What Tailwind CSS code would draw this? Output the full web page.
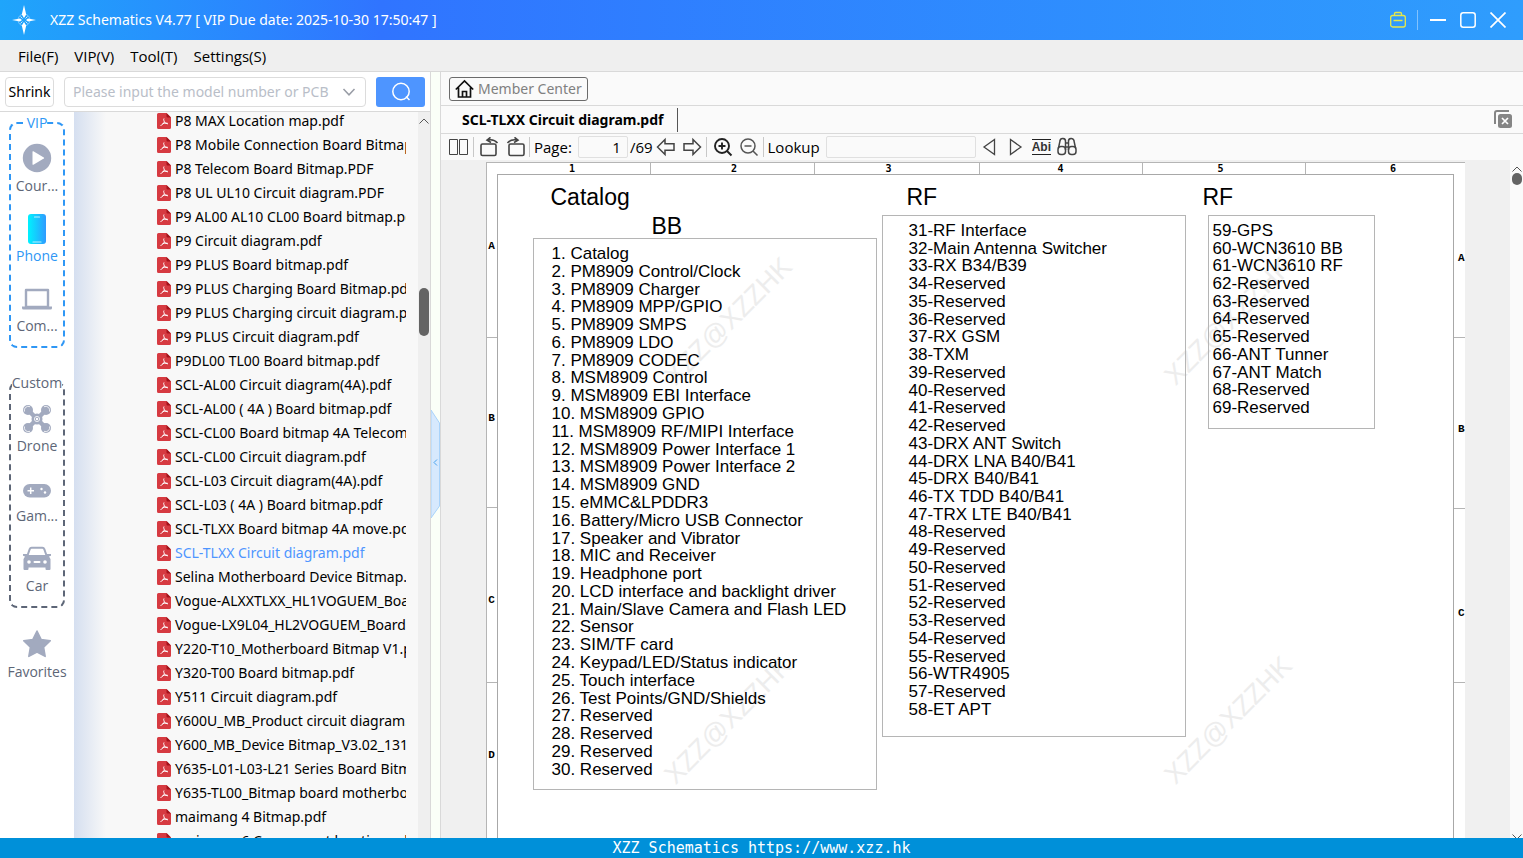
<!DOCTYPE html>
<html lang="en">
<head>
    <meta charset="UTF-8">
    <meta name="viewport" content="width=device-width, initial-scale=1.0">
    <title>XZZ Schematics</title>
    <script src="https://cdn.jsdelivr.net/npm/@tailwindcss/browser@4"></script>
</head>
<body class="h-screen flex flex-col overflow-hidden bg-white text-black text-[14px] leading-5 font-['Noto_Sans','Noto_Sans_CJK_SC',sans-serif]">
    <!-- Title bar -->
    <header class="h-10 shrink-0 flex items-center bg-linear-to-r from-[#1fa5fb] via-[#3074ff] via-25% to-[#2f9dfd] text-white pl-3 pr-[17px]">
        <svg class="w-6 h-8 shrink-0" viewBox="0 0 24 32" fill="none">
            <circle cx="12" cy="16" r="6" stroke="#9fd4ff" stroke-width="1" opacity=".7"/>
            <path d="M12 1l2.200 9.500L12 14l-2.200-3.500zM12 31l2.200-9.500L12 18l-2.200 3.500zM0 16l8-1.600 2 1.600-2 1.600zM24 16l-8-1.600-2 1.600 2 1.600z" fill="#fff"/>
            <path d="M8.500 12.500l2 2M15.500 12.500l-2 2M8.500 19.500l2-2M15.500 19.500l-2-2" stroke="#cfe8ff"/>
        </svg>
        <h1 class="ml-3.5 whitespace-nowrap">XZZ Schematics V4.77 [ VIP Due date: 2025-10-30 17:50:47 ]</h1>
        <div class="ml-auto flex items-center">
            <button aria-label="Toolbox" class="w-4 h-5">
                <svg class="w-4 h-5" viewBox="0 0 16 20" fill="none" stroke="#e6e84a" stroke-width="1.300">
                    <rect x=".7" y="5.500" width="14.600" height="11.500" rx="2"/>
                    <path d="M4.500 5.500V3.700a1.200 1.200 0 0 1 1.200-1.200h4.600a1.200 1.200 0 0 1 1.200 1.200v1.800M3.500 10.500h9"/>
                </svg>
            </button>
            <span class="w-px h-5 bg-white/40 ml-[11px]"></span>
            <button aria-label="Minimize" class="w-4 h-4 ml-3">
                <svg class="w-4 h-4" viewBox="0 0 16 16" stroke="#fff" stroke-width="2"><path d="M0 8h16"/></svg>
            </button>
            <button aria-label="Maximize" class="w-4 h-4 ml-3.5">
                <svg class="w-4 h-4" viewBox="0 0 16 16" fill="none" stroke="#fff" stroke-width="1.500"><rect x=".8" y=".8" width="14.400" height="14.400" rx="2.500"/></svg>
            </button>
            <button aria-label="Close" class="w-4 h-4 ml-3.5">
                <svg class="w-4 h-4" viewBox="0 0 16 16" stroke="#fff" stroke-width="1.700"><path d="M.5.5l15 15M15.500.5l-15 15"/></svg>
            </button>
        </div>
    </header>

    <!-- Menu bar -->
    <nav class="h-8 shrink-0 flex items-center gap-4 px-[18px] bg-[#efefef] border-b border-[#d9d9d9] text-[15px] font-['Open_Sans',sans-serif]">
        <button>File(F)</button>
        <button>VIP(V)</button>
        <button>Tool(T)</button>
        <button>Settings(S)</button>
    </nav>

    <main class="flex-1 min-h-0 flex">
        <!-- Left panel -->
        <section class="w-[431px] shrink-0 flex flex-col border-r border-[#d9d9d9]">
            <form class="h-10 shrink-0 flex items-center px-[5px] border-b border-[#d9d9d9]">
                <button type="button" class="w-[49px] h-[30px] border border-[#dcdcdc] rounded text-center">Shrink</button>
                <div class="relative ml-2.5">
                    <input type="text" aria-label="Model number" placeholder="Please input the model number or PCB" class="w-[302px] h-[30px] pl-2 pr-8 border border-[#dcdcdc] rounded placeholder:text-[#b9bec8] outline-none">
                    <svg class="absolute right-2.5 top-2 w-3.5 h-3.5" viewBox="0 0 14 14" fill="none" stroke="#999da6" stroke-width="1.500"><path d="M1.500 4L7 9.800 12.500 4"/></svg>
                </div>
                <button type="button" aria-label="Search" class="ml-2.5 w-[49px] h-[30px] rounded-[3px] bg-[#4e95ff] flex items-center justify-center">
                    <svg class="w-5 h-5" viewBox="0 0 20 20" fill="none" stroke="#fff" stroke-width="1.500"><circle cx="10" cy="9.500" r="8.200"/><path d="M15 14.500l3.500 3.500"/></svg>
                </button>
            </form>

            <div class="flex-1 min-h-0 flex">
                <!-- Categories -->
                <aside class="w-[74px] shrink-0 pt-1 px-[9px] text-[#5d6677] font-['Open_Sans',sans-serif]">
                    <fieldset class="min-w-0 border-2 border-dashed border-[#2f97f5] rounded-lg pt-3 pb-2.5">
                        <legend class="mx-auto leading-[14px] text-[#2f97f5]">VIP</legend>
                        <button class="flex flex-col items-center gap-0.5 mx-auto">
                            <svg class="w-8 h-8" viewBox="0 0 32 32"><circle cx="16" cy="16" r="14.200" fill="#a2aabf"/><path d="M11.500 9.800v12.400a.6.600 0 0 0 .9.500l10.400-6.200a.6.600 0 0 0 0-1L12.400 9.300a.6.600 0 0 0-.9.500z" fill="#fff"/></svg>
                            <span>Cour...</span>
                        </button>
                        <button class="flex flex-col items-center gap-0.5 mx-auto mt-4 text-[#2f97f5]">
                            <svg class="w-8 h-8" viewBox="0 0 32 32">
                                <defs><linearGradient id="phone"><stop offset="0" stop-color="#00f2fe"/><stop offset="1" stop-color="#2f9bff"/></linearGradient></defs>
                                <rect x="7" y="2" width="18" height="30" rx="3" fill="url(#phone)"/>
                                <path d="M13.500 5h5M12 30h8" stroke="#b8f2ff" stroke-width="1.200" stroke-linecap="round"/>
                            </svg>
                            <span>Phone</span>
                        </button>
                        <button class="flex flex-col items-center gap-0.5 mx-auto mt-4">
                            <svg class="w-8 h-8" viewBox="0 0 32 32"><path d="M5 8h22v17H5z" fill="none" stroke="#a2aabf" stroke-width="2.400" stroke-linejoin="round"/><path d="M1 24.500h30V26a1.500 1.500 0 0 1-1.500 1.500h-27A1.500 1.500 0 0 1 1 26z" fill="#a2aabf"/></svg>
                            <span>Com...</span>
                        </button>
                    </fieldset>
                    <fieldset class="min-w-0 mt-7 border-2 border-dashed border-[#5d6677] rounded-lg pt-3 pb-2.5">
                        <legend class="mx-auto leading-[14px] whitespace-nowrap">Custom</legend>
                        <button class="flex flex-col items-center gap-0.5 mx-auto">
                            <svg class="w-8 h-8" viewBox="0 0 32 32" fill="#a2aabf">
                                <path d="M6 7l20 20M26 7L6 27" stroke="#a2aabf" stroke-width="4.500"/>
                                <circle cx="7" cy="8" r="5"/><circle cx="25" cy="8" r="5"/><circle cx="7" cy="26" r="5"/><circle cx="25" cy="26" r="5"/><circle cx="16" cy="17" r="5.500"/>
                                <g fill="none" stroke="#fff" stroke-width=".8"><circle cx="16" cy="17" r="2.600"/><path d="M3.500 9.500A4 4 0 0 1 9 4.700M28.500 9.500A4 4 0 0 0 23 4.700M3.500 24.500A4 4 0 0 0 9 29.300M28.500 24.500A4 4 0 0 1 23 29.300"/></g>
                                <circle cx="16" cy="17" r="1.200" fill="#fff"/>
                            </svg>
                            <span>Drone</span>
                        </button>
                        <button class="flex flex-col items-center gap-0.5 mx-auto mt-4">
                            <svg class="w-8 h-8" viewBox="0 0 32 32"><rect x="2" y="12" width="28" height="13.500" rx="6.700" fill="#a2aabf"/><path d="M6.500 18.700h6.500M9.700 15.500V22" stroke="#fff" stroke-width="1.500"/><circle cx="20.500" cy="17" r="1.200" fill="#fff"/><circle cx="24" cy="20.500" r="1.200" fill="#fff"/></svg>
                            <span>Gam...</span>
                        </button>
                        <button class="flex flex-col items-center gap-0.5 mx-auto mt-4">
                            <svg class="w-8 h-8" viewBox="0 0 32 32">
                                <path d="M6.500 13.500L8.700 7.200a2 2 0 0 1 1.900-1.400h10.800a2 2 0 0 1 1.900 1.400l2.200 6.300" fill="none" stroke="#a2aabf" stroke-width="2"/>
                                <path d="M2 12h4l1 1h18l1-1h4v1.800l-2 .7 1.500 2.500V27a1 1 0 0 1-1 1h-3a1 1 0 0 1-1-1v-1.500h-17V27a1 1 0 0 1-1 1h-3a1 1 0 0 1-1-1V17L4 14.500l-2-.7z" fill="#a2aabf"/>
                                <circle cx="8" cy="20" r="1.800" fill="#fff"/><circle cx="24" cy="20" r="1.800" fill="#fff"/><rect x="12.500" y="19" width="7" height="2" rx="1" fill="#fff"/>
                            </svg>
                            <span>Car</span>
                        </button>
                    </fieldset>
                    <button class="flex flex-col items-center gap-0.5 mt-5 w-full">
                        <svg class="w-8 h-8" viewBox="0 0 32 32"><path d="M16 3l4.100 8.400 9.200 1.300-6.700 6.500 1.600 9.200L16 24.100l-8.200 4.300 1.600-9.200-6.700-6.500 9.200-1.300z" fill="#a2aabf" stroke="#a2aabf" stroke-width="1.500" stroke-linejoin="round"/></svg>
                        <span>Favorites</span>
                    </button>
                </aside>

                <!-- File tree -->
                <div class="flex-1 min-w-0 flex bg-[#f8f8f8]">
                    <div class="w-8 shrink-0 bg-linear-to-r from-[#d5dff0] to-[#f8f8f8]"></div>
                    <ul id="files" class="flex-1 min-w-0 overflow-hidden ml-[51px] mr-3 -mt-[3px] [clip-path:inset(3px_0_0_0)]"></ul>
                    <div class="w-3 shrink-0 bg-[#efefef] flex flex-col items-center">
                        <svg class="w-2.5 h-2.5 mt-1" viewBox="0 0 10 10" fill="none" stroke="#555"><path d="M.5 7.500L5 3l4.500 4.500"/></svg>
                        <div class="w-2.5 h-12 mt-[162px] rounded-full bg-[#646464]"></div>
                    </div>
                </div>
            </div>
        </section>

        <!-- Splitter -->
        <div class="w-[9px] shrink-0 bg-[#fafff8] flex items-center">
            <button aria-label="Collapse panel" class="w-[9px] h-[110px] mt-[18px]">
                <svg class="w-[9px] h-[110px]" viewBox="0 0 9 110"><path d="M0 1l8.500 13v83L0 109z" fill="#d7e9fd" stroke="#a9d3fa"/><path d="M6 50.500L3 53.500l3 3" fill="none" stroke="#4aa3ee"/></svg>
            </button>
        </div>

        <!-- Viewer -->
        <section class="flex-1 min-w-0 flex flex-col border-l border-[#d9d9d9] bg-[#fafafa]">
            <div class="h-[34px] shrink-0 flex items-center px-2 border-b border-[#d9d9d9]">
                <button class="h-6 px-[5px] flex items-center gap-[3px] border border-[#6b6b6b] rounded-[3px] text-[#808080]">
                    <svg class="w-5 h-5" viewBox="0 0 20 20" fill="none" stroke="#111" stroke-width="1.700"><path d="M.8 10.500L9.500 2l8.700 8.500M3.500 8.500V18h12V8.500M7.500 18v-5.500h4V18"/></svg>
                    Member Center
                </button>
            </div>
            <div class="h-7 shrink-0 flex items-center pl-[21px] pr-2.5 border-b border-[#d9d9d9]">
                <button class="h-6 pr-3.5 font-bold border-r border-[#555] whitespace-nowrap">SCL-TLXX Circuit diagram.pdf</button>
                <button aria-label="Close all tabs" class="ml-auto">
                    <svg class="w-5 h-5" viewBox="0 0 20 20"><path d="M2 14V3a2 2 0 0 1 2-2h12" fill="none" stroke="#858585" stroke-width="2"/><rect x="5" y="4" width="14" height="14" rx="2.500" fill="#858585"/><path d="M9 8l6 6M15 8l-6 6" stroke="#fff" stroke-width="1.700"/></svg>
                </button>
            </div>
            <div class="h-[26px] shrink-0 flex items-center pl-2 whitespace-nowrap text-[15px] font-['Open_Sans',sans-serif]">
                <button aria-label="Two pages"><svg class="w-5 h-5" viewBox="0 0 20 20" fill="none" stroke="#444"><path d="M.5 2.500h8v15h-8zM10.500 2.500h8v15h-8z"/></svg></button>
                <span class="w-px h-5 bg-[#c8c8c8] ml-1"></span>
                <button aria-label="Rotate left" class="ml-1.5"><svg class="w-5 h-5" viewBox="0 0 20 20" fill="none" stroke="#444" stroke-width="1.600"><rect x="1" y="7" width="15" height="11.500" rx="1.500"/><path d="M7 3.200c4-1 8-.2 10.500 2.800M10.500.3L7 3.200l4 2.300"/></svg></button>
                <button aria-label="Rotate right" class="ml-1.5"><svg class="w-5 h-5" viewBox="0 0 20 20" fill="none" stroke="#444" stroke-width="1.600"><rect x="3" y="7" width="15" height="11.500" rx="1.500"/><path d="M12 3.200c-4-1-8-.2-10.500 2.800M8.500.3L12 3.200l-4 2.300"/></svg></button>
                <span class="w-px h-5 bg-[#c8c8c8] ml-[3px]"></span>
                <label for="page" class="ml-1">Page:</label>
                <input id="page" type="text" value="1" class="ml-1.5 w-[50px] h-[22px] pr-1.5 text-right border border-[#e0e0e0] rounded-[2px] outline-none">
                <span class="ml-0.5">/69</span>
                <button aria-label="Previous page" class="ml-[3px]"><svg class="w-5 h-5" viewBox="0 0 20 20" fill="none" stroke="#444" stroke-width="1.500"><path d="M1.500 10L9 2.500v4.300h9v6.400H9v4.300z"/></svg></button>
                <button aria-label="Next page" class="ml-1.5"><svg class="w-5 h-5" viewBox="0 0 20 20" fill="none" stroke="#444" stroke-width="1.500"><path d="M18.500 10L11 2.500v4.300H2v6.400h9v4.300z"/></svg></button>
                <span class="w-px h-5 bg-[#c8c8c8] ml-1"></span>
                <button aria-label="Zoom in" class="ml-1.5"><svg class="w-5 h-5" viewBox="0 0 20 20" fill="none" stroke="#222" stroke-width="1.900"><circle cx="9" cy="9" r="7"/><path d="M14 14l4.500 4.500M9 5.500v7M5.500 9h7"/></svg></button>
                <button aria-label="Zoom out" class="ml-1.5"><svg class="w-5 h-5" viewBox="0 0 20 20" fill="none" stroke="#555" stroke-width="1.500"><circle cx="9" cy="9" r="7"/><path d="M14 14l4.500 4.500M5.500 9h7"/></svg></button>
                <span class="w-px h-5 bg-[#c8c8c8] ml-1"></span>
                <label for="lookup" class="ml-1">Lookup</label>
                <input id="lookup" type="text" class="ml-1.5 w-[150px] h-[22px] px-1 border border-[#e0e0e0] rounded-[2px] outline-none">
                <button aria-label="Find previous" class="ml-1"><svg class="w-5 h-5" viewBox="0 0 20 20" fill="none" stroke="#444" stroke-width="1.300"><path d="M14.500 2.500v15L4 10z"/></svg></button>
                <button aria-label="Find next" class="ml-1.5"><svg class="w-5 h-5" viewBox="0 0 20 20" fill="none" stroke="#444" stroke-width="1.300"><path d="M4.500 2.500v15L15 10z"/></svg></button>
                <button aria-label="Match whole word" class="ml-1.5 h-4 border-y border-[#222] text-[12px] leading-[14px] font-bold text-[#333] font-['Liberation_Sans',sans-serif]">Abi</button>
                <button aria-label="Find" class="ml-1.5"><svg class="w-5 h-5" viewBox="0 0 20 20" fill="none" stroke="#444" stroke-width="1.500"><rect x="1" y="9.500" width="7.500" height="8" rx="3"/><rect x="11.500" y="9.500" width="7.500" height="8" rx="3"/><path d="M1.500 11L3 4a2.300 2.300 0 0 1 5.500.5V13M18.500 11L17 4a2.300 2.300 0 0 0-5.500.5V13M8.500 6h3M8.500 10h3"/></svg></button>
            </div>

            <!-- Document -->
            <div class="flex-1 min-h-0 flex">
                <div class="flex-1 min-w-0 flex justify-center bg-[#f0f0f0] pt-0.5 pr-px overflow-hidden">
                    <div class="relative w-[979px] shrink-0 bg-white border-t border-l border-[#b5b5b5] flex flex-col font-['Liberation_Sans',sans-serif]">
                        <!-- Watermarks -->
                        <div aria-hidden="true" class="absolute inset-0 overflow-hidden text-[27px] leading-none text-[#ededed]">
                            <span class="absolute left-[158px] top-[145px] -rotate-45">XZZ@XZZHK</span>
                            <span class="absolute left-[658px] top-[145px] -rotate-45">XZZ@XZZHK</span>
                            <span class="absolute left-[158px] top-[544px] -rotate-45">XZZ@XZZHK</span>
                            <span class="absolute left-[658px] top-[544px] -rotate-45">XZZ@XZZHK</span>
                        </div>
                        <div class="h-[11px] shrink-0 grid grid-cols-[164px_164px_165px_163px_163px_1fr] divide-x divide-[#b5b5b5] text-center text-[10px] leading-[11px] font-bold font-['DejaVu_Sans_Mono',monospace]">
                            <span class="pl-2">1</span><span class="pl-1">2</span><span class="pr-4">3</span><span>4</span><span class="pr-1.5">5</span><span class="pl-4">6</span>
                        </div>
                        <div class="flex-1 min-h-0 flex">
                            <div class="w-2.5 shrink-0 flex flex-col divide-y divide-[#b5b5b5] text-center text-[11px] leading-3 font-bold font-['Liberation_Mono',monospace]">
                                <span class="h-[164px] pt-[66px]">A</span><span class="h-[171px] pt-[74px]">B</span><span class="h-[175px] pt-[86px]">C</span><span class="h-[155px] pt-[66px]">D</span>
                            </div>
                            <div class="flex-1 min-w-0 flex items-start border-t border-x border-[#a8a8a8] pl-[35px] pt-2.5 text-[17px] leading-[17px] whitespace-nowrap z-10">
                                <div class="w-[344px]">
                                    <h2 class="pl-[18px] text-[23px] leading-6">Catalog</h2>
                                    <h3 class="pl-[119px] mt-[5px] text-[23px] leading-6">BB</h3>
                                    <ol id="bb" class="h-[552px] flex flex-col justify-between border border-[#b5b5b5] pl-[18px] pt-1.5 pb-[11px]"></ol>
                                </div>
                                <div class="w-[304px] ml-[5px]">
                                    <h2 class="pl-[25px] text-[23px] leading-6">RF</h2>
                                    <ol id="rf1" class="h-[522px] mt-1.5 flex flex-col justify-between border border-[#b5b5b5] pl-[26px] pt-1.5 pb-[18px]"></ol>
                                </div>
                                <div class="w-[167px] ml-[22px]">
                                    <h2 class="-ml-[5px] text-[23px] leading-6">RF</h2>
                                    <ol id="rf2" class="h-[214px] mt-1.5 flex flex-col justify-between border border-[#b5b5b5] pl-1 pt-1.5 pb-3"></ol>
                                </div>
                            </div>
                            <div class="w-[11px] shrink-0 flex flex-col divide-y divide-[#b5b5b5] text-right text-[11px] leading-3 font-bold font-['Liberation_Mono',monospace]">
                                <span class="h-[164px] pt-[78px]">A</span><span class="h-[171px] pt-[85px]">B</span><span class="h-[175px] pt-[98px]">C</span><span class="h-[155px]"></span>
                            </div>
                        </div>
                    </div>
                </div>
                <div class="w-[13px] shrink-0 flex flex-col items-center">
                    <svg class="w-2.5 h-2.5 mt-1" viewBox="0 0 10 10" fill="none" stroke="#555"><path d="M.5 7.500L5 3l4.500 4.500"/></svg>
                    <div class="w-2.5 h-3 -mt-px rounded-full bg-[#646464]"></div>
                    <svg class="w-2.5 h-2.5 mt-auto -mb-1" viewBox="0 0 10 10" fill="none" stroke="#555"><path d="M.5 2.500L5 7l4.500-4.500"/></svg>
                </div>
            </div>
        </section>
    </main>

    <!-- Status bar -->
    <footer class="h-5 shrink-0 bg-[#0090d9] text-white text-center text-[15px] leading-5 font-['DejaVu_Sans_Mono',monospace]">XZZ Schematics https://www.xzz.hk</footer>

    <script>
        const files = [
            'P8 MAX Location map.pdf',
            'P8 Mobile Connection Board Bitmap.pdf',
            'P8 Telecom Board Bitmap.PDF',
            'P8 UL UL10 Circuit diagram.PDF',
            'P9 AL00 AL10 CL00 Board bitmap.pdf',
            'P9 Circuit diagram.pdf',
            'P9 PLUS Board bitmap.pdf',
            'P9 PLUS Charging Board Bitmap.pdf',
            'P9 PLUS Charging circuit diagram.pdf',
            'P9 PLUS Circuit diagram.pdf',
            'P9DL00 TL00 Board bitmap.pdf',
            'SCL-AL00 Circuit diagram(4A).pdf',
            'SCL-AL00 ( 4A ) Board bitmap.pdf',
            'SCL-CL00 Board bitmap 4A Telecom.pdf',
            'SCL-CL00 Circuit diagram.pdf',
            'SCL-L03 Circuit diagram(4A).pdf',
            'SCL-L03 ( 4A ) Board bitmap.pdf',
            'SCL-TLXX Board bitmap 4A move.pdf',
            'SCL-TLXX Circuit diagram.pdf',
            'Selina Motherboard Device Bitmap.pdf',
            'Vogue-ALXXTLXX_HL1VOGUEM_Board.pdf',
            'Vogue-LX9L04_HL2VOGUEM_Board.pdf',
            'Y220-T10_Motherboard Bitmap V1.pdf',
            'Y320-T00 Board bitmap.pdf',
            'Y511 Circuit diagram.pdf',
            'Y600U_MB_Product circuit diagram.pdf',
            'Y600_MB_Device Bitmap_V3.02_131.pdf',
            'Y635-L01-L03-L21 Series Board Bitmap.pdf',
            'Y635-TL00_Bitmap board motherboard.pdf',
            'maimang 4 Bitmap.pdf',
            'maimang 6 Component location.pdf'
        ];
        const current = 'SCL-TLXX Circuit diagram.pdf';

        const pdfIcon = `<svg class="w-3.5 h-4 shrink-0" viewBox="0 0 14 16"><path d="M1.500 0H9.500L14 4.500v10a1.500 1.500 0 0 1-1.500 1.500h-11A1.500 1.500 0 0 1 0 14.500v-13A1.500 1.500 0 0 1 1.500 0z" fill="#d63a41"/><path d="M9.500 0L14 4.500H10.500a1 1 0 0 1-1-1z" fill="#a3131b"/><path d="M7 5.500c-.9 1 .4 2.700.3 3.500C7 10 5 12.300 3.500 12.500M7.300 9c1 1.200 2.500 1.800 3.700 1.800M5.500 10.700c1.500-.6 3-.8 5-.5" fill="none" stroke="#fff"/></svg>`;

        document.getElementById('files').innerHTML = files.map(name => `
            <li class="h-6">
                <a href="#" class="h-6 flex items-center gap-1 whitespace-nowrap ${name === current ? 'text-[#4e95ff]' : ''}">${pdfIcon}${name}</a>
            </li>`).join('');

        const bb = ['Catalog', 'PM8909 Control/Clock', 'PM8909 Charger', 'PM8909 MPP/GPIO', 'PM8909 SMPS', 'PM8909 LDO',
            'PM8909 CODEC', 'MSM8909 Control', 'MSM8909 EBI Interface', 'MSM8909 GPIO', 'MSM8909 RF/MIPI Interface',
            'MSM8909 Power Interface 1', 'MSM8909 Power Interface 2', 'MSM8909 GND', 'eMMC&amp;LPDDR3',
            'Battery/Micro USB Connector', 'Speaker and Vibrator', 'MIC and Receiver', 'Headphone port',
            'LCD interface and backlight driver', 'Main/Slave Camera and Flash LED', 'Sensor', 'SIM/TF card',
            'Keypad/LED/Status indicator', 'Touch interface', 'Test Points/GND/Shields', 'Reserved', 'Reserved', 'Reserved', 'Reserved'];
        const rf1 = ['RF Interface', 'Main Antenna Switcher', 'RX B34/B39', 'Reserved', 'Reserved', 'Reserved', 'RX GSM', 'TXM',
            'Reserved', 'Reserved', 'Reserved', 'Reserved', 'DRX ANT Switch', 'DRX LNA B40/B41', 'DRX B40/B41', 'TX TDD B40/B41',
            'TRX LTE B40/B41', 'Reserved', 'Reserved', 'Reserved', 'Reserved', 'Reserved', 'Reserved', 'Reserved', 'Reserved',
            'WTR4905', 'Reserved', 'ET APT'];
        const rf2 = ['GPS', 'WCN3610 BB', 'WCN3610 RF', 'Reserved', 'Reserved', 'Reserved', 'Reserved', 'ANT Tunner', 'ANT Match', 'Reserved', 'Reserved'];

        function fill(id, items, first, sep) {
            document.getElementById(id).innerHTML = items.map((text, i) => `<li>${first + i}${sep}${text}</li>`).join('');
        }
        fill('bb', bb, 1, '. ');
        fill('rf1', rf1, 31, '-');
        fill('rf2', rf2, 59, '-');
    </script>
</body>
</html>
